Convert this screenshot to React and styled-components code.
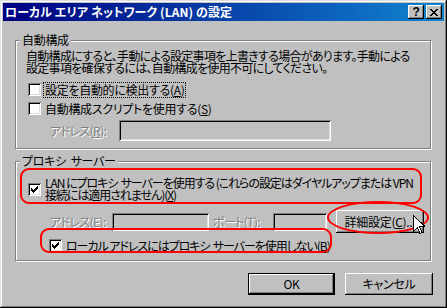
import styled, { createGlobalStyle } from "styled-components";

const Global = createGlobalStyle`
  html, body {
    margin: 0;
    padding: 0;
    background: #c0c0c0;
  }
  body {
    font-family: "Noto Sans CJK JP", "Noto Sans", sans-serif;
    font-size: 12px;
  }
`;

const Window = styled.div`
  position: relative;
  width: 447px;
  height: 308px;
  box-sizing: border-box;
  padding: 3px;
  background: #c0c0c0;
  box-shadow: inset -1px -1px #000, inset 1px 1px #dfdfdf,
    inset -2px -2px #808080, inset 2px 2px #fff;
  display: flex;
  flex-direction: column;
  color: #000;
  font-size: 12px;
  line-height: 12px;
  letter-spacing: -0.3px;
  font-feature-settings: "palt";
  white-space: nowrap;
`;

const TitleBar = styled.div`
  height: 18px;
  display: flex;
  align-items: center;
  justify-content: space-between;
  padding: 0 2px 0 2px;
  background: linear-gradient(to right, #000080, #1084d0);
  color: #fff;
  font-weight: bold;
`;

const TitleText = styled.span`
  letter-spacing: 0.1px;
`;

const TitleButtons = styled.div`
  display: flex;
  gap: 2px;
`;

const TitleButton = styled.div`
  width: 16px;
  height: 14px;
  box-sizing: border-box;
  background: #c0c0c0;
  box-shadow: inset -1px -1px #000, inset 1px 1px #fff, inset -2px -2px #808080;
  display: flex;
  align-items: center;
  justify-content: center;
  color: #000;
  font-family: "Liberation Sans", sans-serif;
  font-size: 12px;
  font-weight: bold;
`;

const Body = styled.div`
  display: flex;
  flex-direction: column;
  padding: 0 0 0 12px;
`;

const Group = styled.div`
  width: 416px;
  height: ${(p) => p.$h}px;
  margin-top: ${(p) => p.$top}px;
  box-sizing: border-box;
  border: 1px solid #808080;
  box-shadow: inset 1px 1px #fff, 1px 1px #fff;
  display: flex;
  flex-direction: column;
`;

const Legend = styled.span`
  align-self: flex-start;
  margin: -7px 0 0 4px;
  padding: 0 2px;
  background: #c0c0c0;
  line-height: 12px;
`;

const Desc = styled.p`
  margin: 4px 0 0 10px;
  line-height: 12px;
  letter-spacing: -0.7px;
`;

const Row = styled.div`
  display: flex;
  align-items: center;
  min-height: ${(p) => p.$h || 19}px;
  margin-top: ${(p) => p.$mt || 0}px;
  margin-left: ${(p) => p.$ml}px;
`;

const Box = styled.div`
  width: 13px;
  height: 13px;
  flex: none;
  box-sizing: border-box;
  background: #fff;
  box-shadow: inset 1px 1px #808080, inset -1px -1px #fff,
    inset 2px 2px #000, inset -2px -2px #dfdfdf;
  display: flex;
  align-items: center;
  justify-content: center;
`;

const Label = styled.span`
  margin-left: 2px;
  padding: 1px;
  border: 1px ${(p) => (p.$focus ? "dotted #000" : "solid transparent")};
  line-height: 12px;
  letter-spacing: ${(p) => p.$ls || "inherit"};
`;

const Disabled = styled.span`
  width: ${(p) => p.$w}px;
  margin-left: ${(p) => p.$ml || 0}px;
  flex: none;
  color: #808080;
  text-shadow: 1px 1px #fff;
  letter-spacing: -0.6px;
`;

const Field = styled.div`
  width: ${(p) => p.$w}px;
  height: ${(p) => p.$h}px;
  flex: none;
  box-sizing: border-box;
  background: #c0c0c0;
  box-shadow: inset 1px 1px #808080, inset -1px -1px #fff,
    inset 2px 2px #000, inset -2px -2px #dfdfdf;
`;

const Button = styled.div`
  width: ${(p) => p.$w}px;
  height: ${(p) => p.$h}px;
  flex: none;
  box-sizing: border-box;
  margin-left: ${(p) => p.$ml || 0}px;
  background: #c0c0c0;
  display: flex;
  align-items: center;
  justify-content: center;
  box-shadow: ${(p) =>
    p.$default
      ? "inset 0 0 0 1px #000, inset -2px -2px #000, inset 2px 2px #fff, inset -3px -3px #808080"
      : "inset -1px -1px #000, inset 1px 1px #fff, inset -2px -2px #808080"};
`;

const Footer = styled.div`
  display: flex;
  justify-content: flex-end;
  gap: 10px;
  width: 418px;
  margin-top: 12px;
`;

const Mark = styled.div`
  position: absolute;
  left: ${(p) => p.$x}px;
  top: ${(p) => p.$y}px;
  width: ${(p) => p.$w}px;
  height: ${(p) => p.$h}px;
  box-sizing: border-box;
  border: 2px solid #ff0000;
  border-radius: ${(p) => (p.$oval ? "50%" : "9px")};
  pointer-events: none;
`;

const Cursor = styled.svg`
  position: absolute;
  left: 413px;
  top: 215px;
`;

function Check() {
  const cols = [2, 3, 4, 3, 2, 1, 0];
  return (
    <svg width="7" height="7" viewBox="0 0 7 7" shapeRendering="crispEdges">
      <path d={cols.map((y, x) => `M${x} ${y}h1v3h-1z`).join("")} fill="#000" />
    </svg>
  );
}

function CheckBox({ checked }) {
  return <Box>{checked && <Check />}</Box>;
}

export default function App() {
  return (
    <>
      <Global />
      <Window>
        <TitleBar>
          <TitleText>ローカル エリア ネットワーク (LAN) の設定</TitleText>
          <TitleButtons>
            <TitleButton>?</TitleButton>
            <TitleButton>
              <svg width="8" height="7" viewBox="0 0 8 7" shapeRendering="crispEdges">
                <path d="M0 0h2l2 2.5L6 0h2L5 3.5 8 7H6L4 4.5 2 7H0l3-3.5z" fill="#000" />
              </svg>
            </TitleButton>
          </TitleButtons>
        </TitleBar>

        <Body>
          <Group $top={19} $h={109}>
            <Legend>自動構成</Legend>
            <Desc>
              自動構成にすると、手動による設定事項を上書きする場合があります。手動による
              <br />
              設定事項を確保するには、自動構成を使用不可にしてください。
            </Desc>
            <Row $ml={12} $mt={6}>
              <CheckBox />
              <Label $focus>
                設定を自動的に検出する(<u>A</u>)
              </Label>
            </Row>
            <Row $ml={12}>
              <CheckBox />
              <Label>
                自動構成スクリプトを使用する(<u>S</u>)
              </Label>
            </Row>
            <Row $ml={34} $mt={2} $h={21}>
              <Disabled $w={69}>
                アドレス(<u>R</u>):
              </Disabled>
              <Field $w={212} $h={21} />
            </Row>
          </Group>

          <Group $top={12} $h={100}>
            <Legend>プロキシ&nbsp; サーバー</Legend>
            <Row $ml={12} $mt={8} $h={24}>
              <CheckBox checked />
              <Label $ls="-1.05px">
                LAN にプロキシ&nbsp; サーバーを使用する (これらの設定はダイヤルアップまたは VPN
                <br />
                接続には適用されません)(<u>X</u>)
              </Label>
            </Row>
            <Row $ml={34} $mt={7} $h={23}>
              <Disabled $w={62}>
                アドレス(<u>E</u>):
              </Disabled>
              <Field $w={97} $h={18} />
              <Disabled $w={60} $ml={4}>
                ポート(<u>T</u>):
              </Disabled>
              <Field $w={54} $h={18} />
              <Button $w={88} $h={23} $ml={9}>
                詳細設定(<u>C</u>)...
              </Button>
            </Row>
            <Row $ml={33} $mt={3}>
              <CheckBox checked />
              <Label $ls="-1.05px">
                ローカル アドレスにはプロキシ&nbsp; サーバーを使用しない(<u>B</u>)
              </Label>
            </Row>
          </Group>

          <Footer>
            <Button $w={87} $h={22} $default>
              OK
            </Button>
            <Button $w={88} $h={22}>
              キャンセル
            </Button>
          </Footer>
        </Body>

        <Mark $x={20} $y={168} $w={402} $h={36} />
        <Mark $x={40} $y={228} $w={292} $h={25} />
        <Mark $x={327} $y={201} $w={102} $h={33} $oval />
        <Cursor width="12" height="20" viewBox="0 0 12 20" shapeRendering="crispEdges">
          <path
            d="M0.5 0.5v16l4-4 2.5 6 2-1-2.5-6h5.5z"
            fill="#fff"
            stroke="#000"
            strokeWidth="1"
          />
        </Cursor>
      </Window>
    </>
  );
}
